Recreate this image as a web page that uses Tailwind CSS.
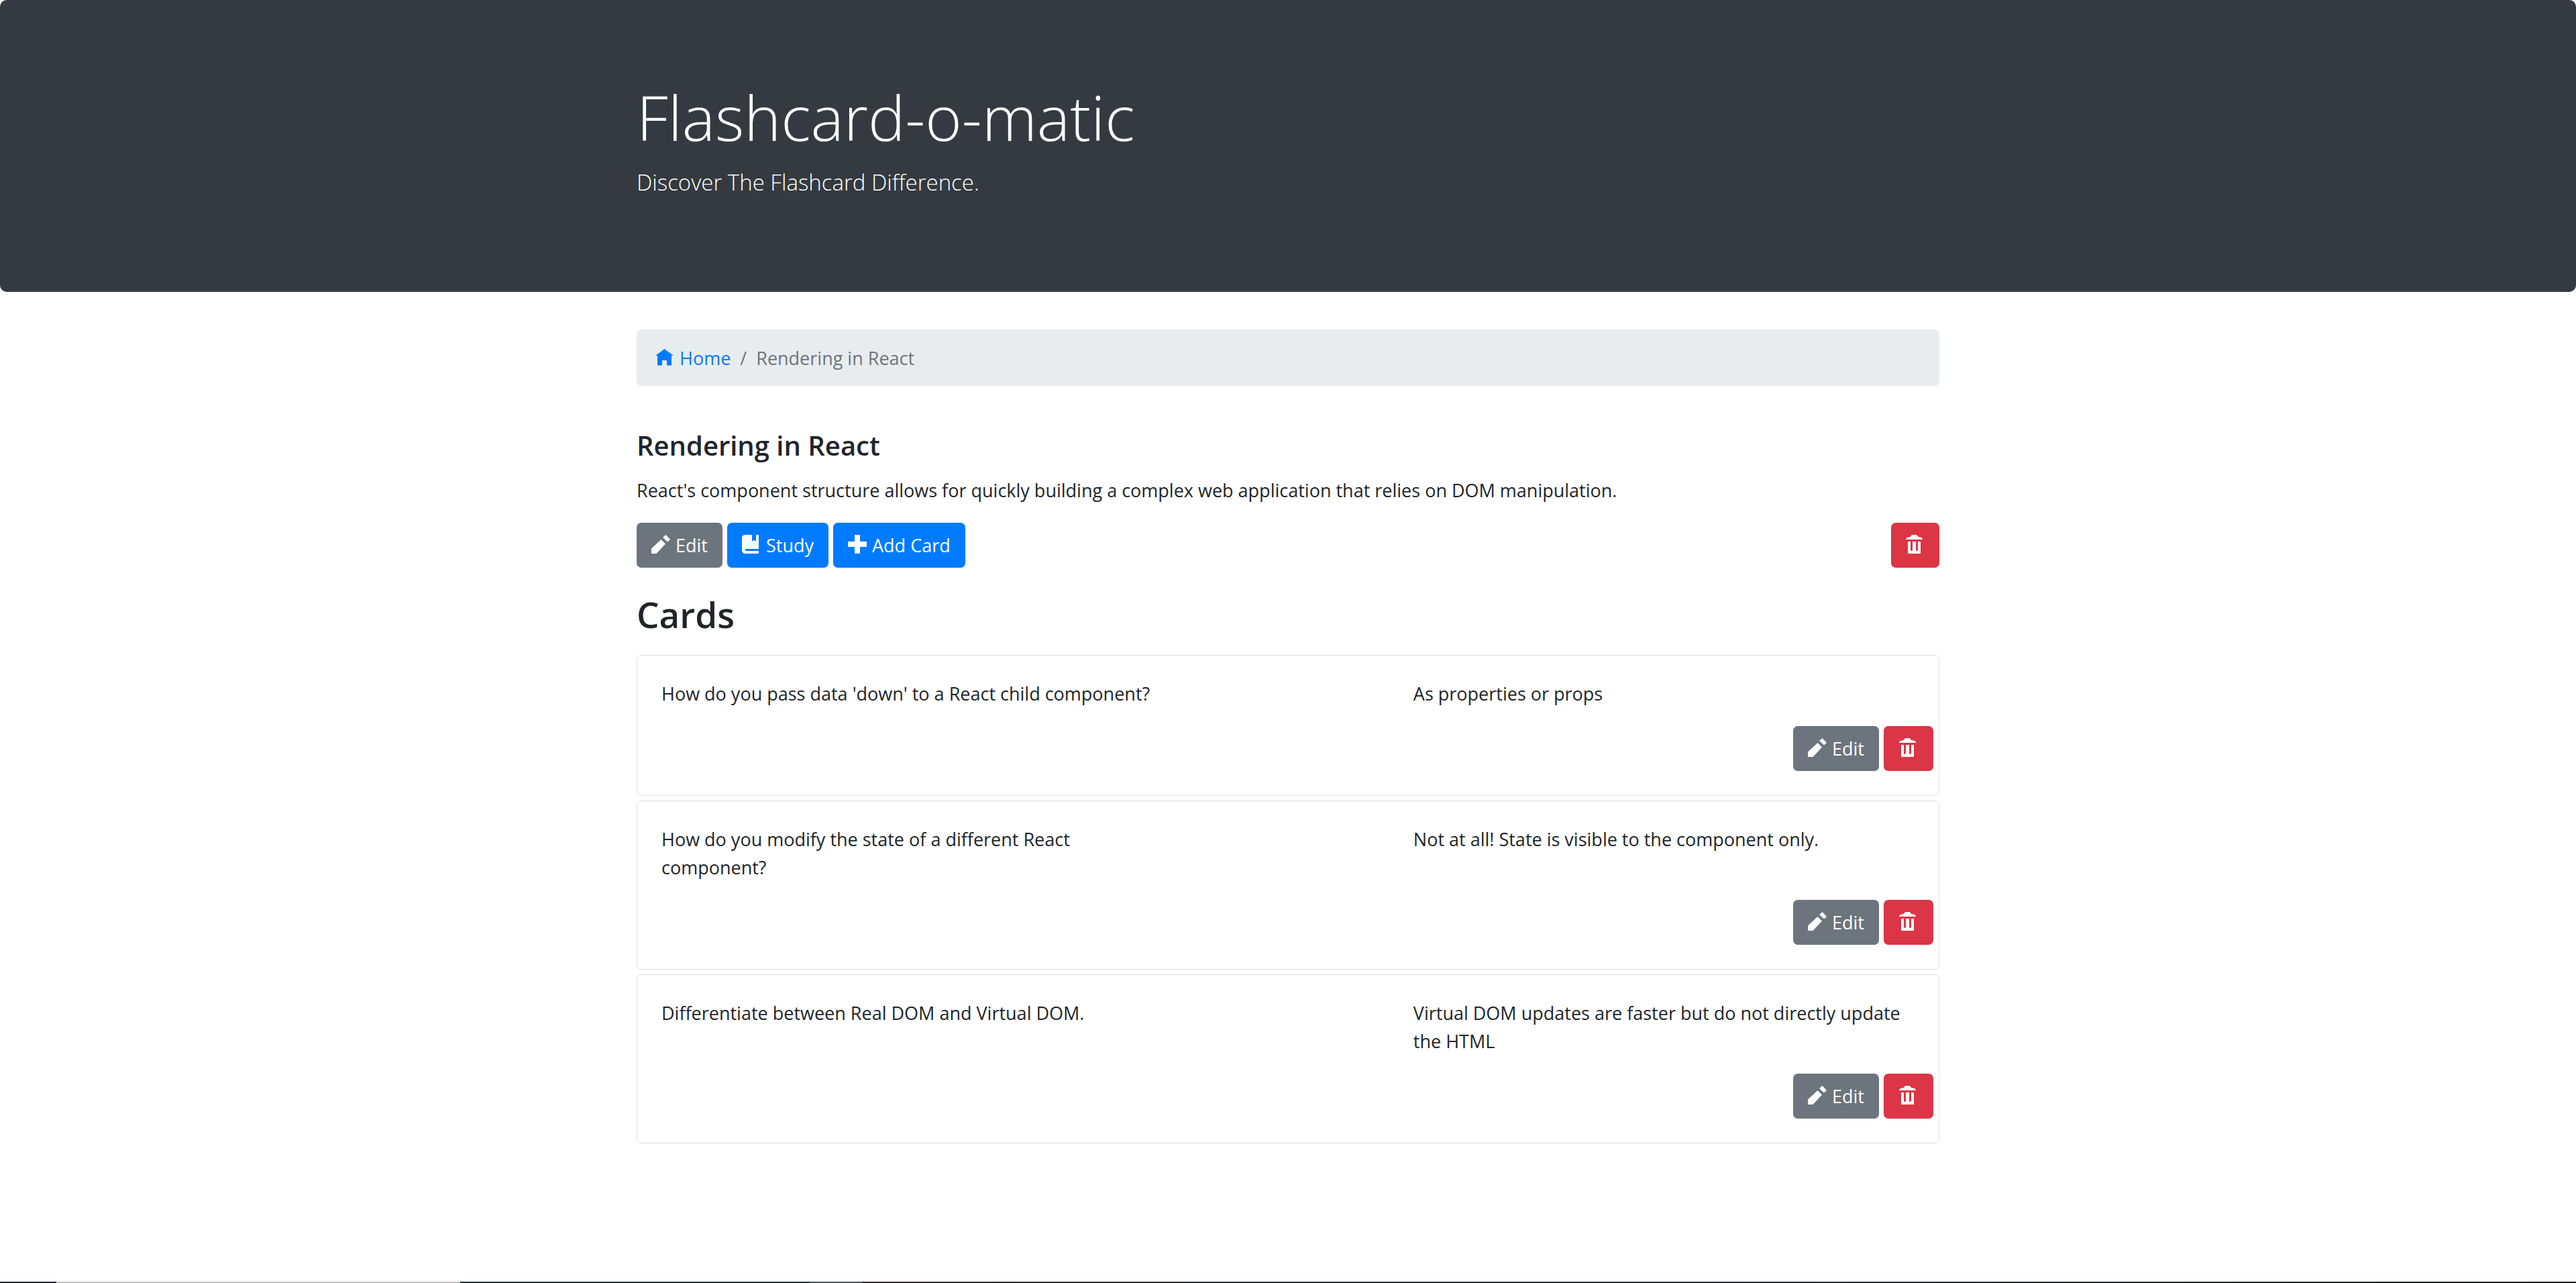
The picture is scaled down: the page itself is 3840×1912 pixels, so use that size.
<!DOCTYPE html>
<html lang="en">
<head>
<meta charset="utf-8">
<title>Flashcard-o-matic</title>
<script src="https://cdn.jsdelivr.net/npm/@tailwindcss/browser@4"></script>
</head>
<body class="flex min-h-screen flex-col bg-white font-['Open_Sans','Noto_Sans',sans-serif] text-[27px] leading-[42px] text-[#212529]">
<svg class="hidden" aria-hidden="true">
  <symbol id="pencil" viewBox="0 0 28 28"><path fill="currentColor" d="M0 28V20.5L14.5 7L21 13.5L7.5 28ZM17 4L21.5 0L28 7L24 10.5Z"/></symbol>
  <symbol id="book" viewBox="0 0 28 28"><path fill="currentColor" d="M4 0H15V10L18 7.500L21 10V0H25V21H6Q4.500 21 4.500 22.500Q4.500 24 6 24H25V28H4Q0 27 0 23V4Q0 1 4 0Z"/></symbol>
  <symbol id="plus" viewBox="0 0 28 28"><path fill="currentColor" d="M10 0H18V10H28V18H18V28H10V18H0V10H10Z"/></symbol>
  <symbol id="trash" viewBox="0 0 28 28"><path fill="currentColor" d="M0 7Q0 4 4 3.500L7 3Q8 0 10 0H15Q17 0 18 3L21 3.500Q25 4 25 7ZM3 10H7V23Q8 25 10 23V10H15V23Q16 25 18 23V10H22V28H3Z"/></symbol>
  <symbol id="home" viewBox="0 0 28 28"><path fill="currentColor" d="M0 10L13.500 0L27 10H24V24.500H17V17H10V24.500H3V10Z"/></symbol>
</svg>

<header class="rounded-[10px] bg-[#343a40] px-6 pt-[115px] pb-[137px] text-white">
  <div class="mx-auto max-w-[1942px]">
    <h1 class="mb-3 text-[93px] leading-[118px] font-light">Flashcard-o-matic</h1>
    <p class="text-[33px] leading-[53px] font-light">Discover The Flashcard Difference.</p>
  </div>
</header>

<main class="mx-auto mt-14 w-full max-w-[1942px]">
  <nav aria-label="Breadcrumb" class="rounded-[7px] bg-[#e9ecef] px-7 pt-[22px] pb-5 text-[#6c757d]">
    <ol class="flex gap-[14px]">
      <li><a href="#" class="flex items-center gap-2 text-[#007bff]"><svg class="size-7"><use href="#home"/></svg>Home</a></li>
      <li aria-hidden="true">/</li>
      <li aria-current="page">Rendering in React</li>
    </ol>
  </nav>

  <section class="mt-16">
    <h2 class="text-[40px] leading-[50px] font-semibold">Rendering in React</h2>
    <p class="mt-[21px]">React's component structure allows for quickly building a complex web application that relies on DOM manipulation.</p>
    <div class="mt-[27px] flex gap-[7px]">
      <button class="flex h-[67px] items-center gap-2 rounded-[7px] bg-[#6c757d] px-[22px] text-white"><svg class="mb-1 size-7"><use href="#pencil"/></svg>Edit</button>
      <button class="flex h-[67px] items-center gap-2 rounded-[7px] bg-[#007bff] px-[22px] text-white"><svg class="mb-1 size-7"><use href="#book"/></svg>Study</button>
      <button class="flex h-[67px] items-center gap-2 rounded-[7px] bg-[#007bff] px-[22px] text-white"><svg class="mb-1 size-7"><use href="#plus"/></svg>Add Card</button>
      <button aria-label="Delete deck" class="ml-auto flex h-[67px] items-center rounded-[7px] bg-[#dc3545] px-[22px] text-white"><svg class="mb-1 size-7"><use href="#trash"/></svg></button>
    </div>
  </section>

  <section class="mt-9">
    <h2 class="text-[53px] leading-[67px] font-semibold">Cards</h2>
    <div class="mt-[27px] flex flex-col gap-[7px]">
      <article class="rounded-[7px] border border-[#dfdfdf] pt-9 pb-9">
        <div class="flex justify-between px-9"><p class="w-2/5">How do you pass data 'down' to a React child component?</p><p class="w-2/5">As properties or props</p></div>
        <div class="mt-[27px] flex justify-end gap-[7px] pr-2">
          <button class="flex h-[67px] items-center gap-2 rounded-[7px] bg-[#6c757d] px-[22px] text-white"><svg class="mb-1 size-7"><use href="#pencil"/></svg>Edit</button>
          <button aria-label="Delete card" class="flex h-[67px] items-center rounded-[7px] bg-[#dc3545] px-[23px] text-white"><svg class="mb-1 size-7"><use href="#trash"/></svg></button>
        </div>
      </article>
      <article class="rounded-[7px] border border-[#dfdfdf] pt-9 pb-9">
        <div class="flex justify-between px-9"><p class="w-2/5">How do you modify the state of a different React component?</p><p class="w-2/5">Not at all! State is visible to the component only.</p></div>
        <div class="mt-[27px] flex justify-end gap-[7px] pr-2">
          <button class="flex h-[67px] items-center gap-2 rounded-[7px] bg-[#6c757d] px-[22px] text-white"><svg class="mb-1 size-7"><use href="#pencil"/></svg>Edit</button>
          <button aria-label="Delete card" class="flex h-[67px] items-center rounded-[7px] bg-[#dc3545] px-[23px] text-white"><svg class="mb-1 size-7"><use href="#trash"/></svg></button>
        </div>
      </article>
      <article class="rounded-[7px] border border-[#dfdfdf] pt-9 pb-9">
        <div class="flex justify-between px-9"><p class="w-2/5">Differentiate between Real DOM and Virtual DOM.</p><p class="w-2/5">Virtual DOM updates are faster but do not directly update the HTML</p></div>
        <div class="mt-[27px] flex justify-end gap-[7px] pr-2">
          <button class="flex h-[67px] items-center gap-2 rounded-[7px] bg-[#6c757d] px-[22px] text-white"><svg class="mb-1 size-7"><use href="#pencil"/></svg>Edit</button>
          <button aria-label="Delete card" class="flex h-[67px] items-center rounded-[7px] bg-[#dc3545] px-[23px] text-white"><svg class="mb-1 size-7"><use href="#trash"/></svg></button>
        </div>
      </article>
    </div>
  </section>
</main>

<!-- Thin strip along the bottom edge -->
<div class="mt-auto flex h-0.5" aria-hidden="true">
  <div class="w-[84px] bg-[#262633]"></div>
  <div class="w-[602px] bg-[#c1c1c1]"></div>
  <div class="w-[521px] bg-[#263331]"></div>
  <div class="w-[78px] bg-[#4c5860]"></div>
  <div class="flex-1 bg-linear-to-r from-[#302e2e] via-[#2b3035] to-[#1f1f1f]"></div>
</div>
</body>
</html>
